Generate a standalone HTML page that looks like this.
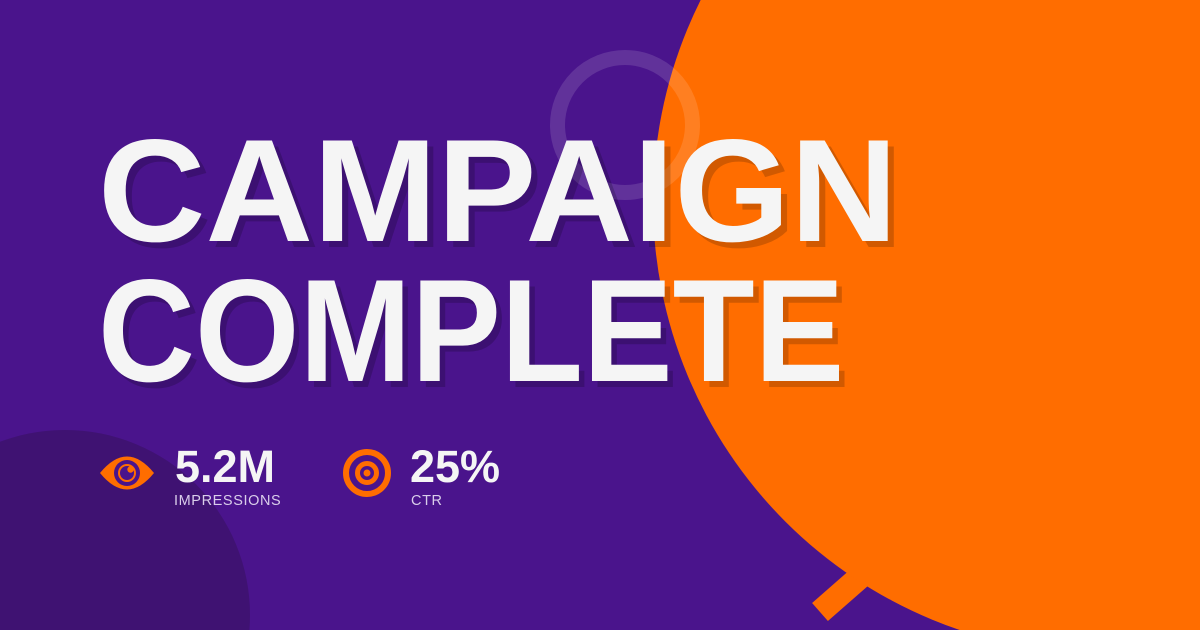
<!DOCTYPE html>
<html><head><style>
html,body{margin:0;width:1200px;height:630px;overflow:hidden}
body{background:#4a148c;position:relative;font-family:"Liberation Sans",sans-serif}
svg.bg{position:absolute;left:0;top:0}
.t{position:absolute;left:98px;color:#f5f5f5;font-weight:bold;font-size:146px;line-height:1;text-shadow:6px 6px 0 rgba(0,0,0,0.18);white-space:nowrap;transform-origin:left top}
.num{position:absolute;color:#f5f5f5;font-weight:bold;font-size:45px;line-height:1}
.lbl{position:absolute;color:#d9cdea;font-size:14.5px;letter-spacing:0.6px;line-height:1}
</style></head><body>
<svg class="bg" width="1200" height="630">
<circle cx="65" cy="615" r="185" fill="#3f1272"/>
<line x1="885" y1="555" x2="820" y2="612" stroke="#ff6d00" stroke-width="24"/>
<circle cx="1105" cy="202" r="452" fill="#ff6d00"/>
<circle cx="625" cy="125" r="67.5" fill="none" stroke="#fff" stroke-opacity="0.13" stroke-width="15"/>
<path d="M100 473 Q127 440 154 473 Q127 506 100 473Z" fill="#ff6d00"/>
<circle cx="127" cy="473" r="13" fill="#4a148c"/>
<circle cx="127" cy="473" r="9" fill="#ff6d00"/>
<circle cx="127" cy="473" r="7" fill="#4a148c"/>
<circle cx="130.5" cy="469.5" r="3.2" fill="#ff6d00"/>
<circle cx="367" cy="473" r="21" fill="none" stroke="#ff6d00" stroke-width="6"/>
<circle cx="367" cy="473" r="9.5" fill="none" stroke="#ff6d00" stroke-width="5"/>
<circle cx="367" cy="473" r="3.5" fill="#ff6d00"/>
</svg>
<div class="t" style="top:118px;transform:scaleX(1.02)">CAMPAIGN</div>
<div class="t" style="top:258px;transform:scaleX(0.92)">COMPLETE</div>
<div class="num" style="left:175px;top:444px">5.2M</div>
<div class="lbl" style="left:174px;top:494px">IMPRESSIONS</div>
<div class="num" style="left:410px;top:444px">25%</div>
<div class="lbl" style="left:411px;top:494px">CTR</div>
</body></html>
